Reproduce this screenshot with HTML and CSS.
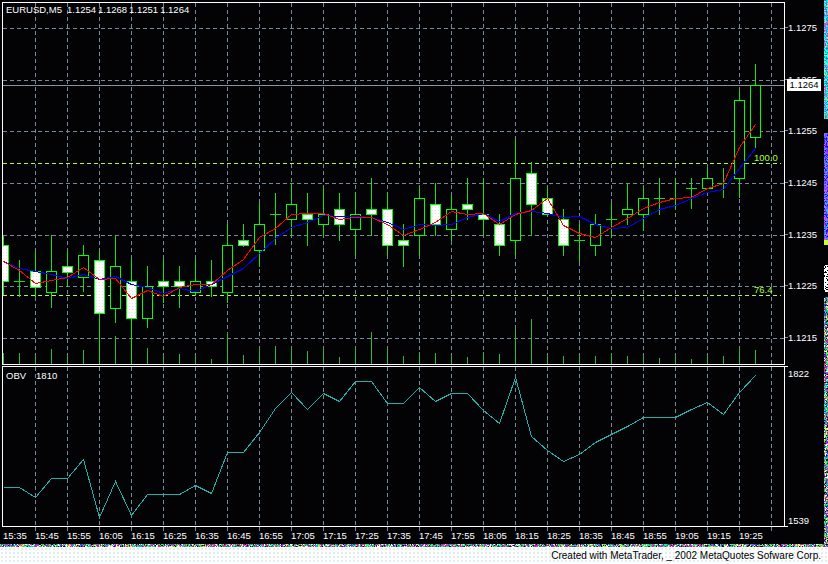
FILE: index.html
```html
<!DOCTYPE html>
<html>
<head>
    <meta charset="utf-8">
    <title>EURUSD,M5</title>
    <link rel="stylesheet" href="styles.css">
</head>
<body>
    <div class="terminal">
        <div class="charts">
            <div class="row">
                <div class="pane pane-main">
                    <svg id="main" class="plot" width="781" height="361" viewBox="3 3 781 361">
                        <defs>
                            <pattern id="speckle" width="3" height="3" patternUnits="userSpaceOnUse">
                                <rect width="3" height="3" fill="#fff"></rect>
                                <rect width="1" height="1" fill="#e3e8e6"></rect>
                            </pattern>
                        </defs>
                    </svg>
                    <div class="legend">
                        <span class="symbol">EURUSD,M5</span>
                        <span>1.1254</span>
                        <span>1.1268</span>
                        <span>1.1251</span>
                        <span>1.1264</span>
                    </div>
                    <span class="fibo fibo-100">100.0</span>
                    <span class="fibo fibo-76">76.4</span>
                </div>
                <div class="price-scale">
                    <div class="tick">1.1275</div>
                    <div class="tick">1.1265</div>
                    <div class="tick">1.1255</div>
                    <div class="tick">1.1245</div>
                    <div class="tick">1.1235</div>
                    <div class="tick">1.1225</div>
                    <div class="tick">1.1215</div>
                    <div class="current-price">1.1264</div>
                </div>
            </div>
            <div class="row row-obv">
                <div class="pane pane-obv">
                    <svg id="obv" class="plot" width="781" height="159" viewBox="3 367 781 159"></svg>
                    <div class="legend legend-obv">
                        <span class="symbol">OBV</span>
                        <span>1810</span>
                    </div>
                </div>
                <div class="obv-scale">
                    <div>1822</div>
                    <div>1539</div>
                </div>
            </div>
            <div class="time-axis">
                <span>15:35</span><span>15:45</span><span>15:55</span><span>16:05</span>
                <span>16:15</span><span>16:25</span><span>16:35</span><span>16:45</span>
                <span>16:55</span><span>17:05</span><span>17:15</span><span>17:25</span>
                <span>17:35</span><span>17:45</span><span>17:55</span><span>18:05</span>
                <span>18:15</span><span>18:25</span><span>18:35</span><span>18:45</span>
                <span>18:55</span><span>19:05</span><span>19:15</span><span>19:25</span>
                <span></span>
            </div>
        </div>
        <canvas id="noise-side" class="noise-side" width="4" height="544"></canvas>
    </div>
    <canvas id="noise-bottom" class="noise-bottom" width="828" height="3"></canvas>
    <div class="footer">Created with MetaTrader, _ 2002 MetaQuotes Sofware Corp.</div>
    <script src="chart.js"></script>
</body>
</html>
```
FILE: styles.css
```css
html, body
{
    margin: 0;
    padding: 0;
}
body
{
    width: 828px;
    height: 564px;
    overflow: hidden;
    background-color: #fff;
    font-family: "Liberation Sans", Arial, sans-serif;
    font-size: 9.5px;
    color: #fff;
}
.terminal
{
    display: flex;
    height: 544px;
    background-color: #030306;
}
.charts
{
    width: 824px;
    padding: 2px 0 0 2px;
    box-sizing: border-box;
}
.row
{
    display: flex;
}
.row-obv
{
    margin-top: 1px;
}
.pane
{
    position: relative;
    width: 783px;
    box-sizing: border-box;
    border: 1px solid #fff;
}
.pane-main
{
    height: 363px;
}
.pane-obv
{
    height: 161px;
}
.plot
{
    display: block;
}
.legend
{
    position: absolute;
    top: 1px;
    left: 3px;
    display: flex;
    gap: 2px;
    line-height: 11px;
}
.legend .symbol
{
    margin-right: 3px;
}
.legend-obv
{
    top: 3px;
}
.legend-obv .symbol
{
    margin-right: 8px;
}
.fibo
{
    position: absolute;
    left: 751px;
    line-height: 11px;
    color: #adff2f;
}
.fibo-100
{
    top: 149px;
}
.fibo-76
{
    top: 281px;
}
.price-scale
{
    position: relative;
    flex: 1;
    display: flex;
    flex-direction: column;
    gap: 40.67px;
    padding-top: 20px;
}
.tick
{
    position: relative;
    height: 11px;
    line-height: 11px;
    padding-left: 3px;
}
.tick::before
{
    content: "";
    position: absolute;
    left: 0;
    top: 5px;
    width: 3px;
    height: 1px;
    background-color: #778899;
}
.current-price
{
    position: absolute;
    top: 77px;
    left: 2px;
    width: 34px;
    height: 12px;
    line-height: 12px;
    text-align: center;
    background-color: #fff;
    color: #000;
}
.obv-scale
{
    flex: 1;
    display: flex;
    flex-direction: column;
    justify-content: space-between;
    padding: 1px 0 1px 3px;
    border-top: 1px solid transparent;
    line-height: 11px;
    position: relative;
}
.obv-scale::before, .obv-scale::after
{
    content: "";
    position: absolute;
    left: 0;
    width: 3px;
    height: 1px;
    background-color: #fff;
}
.obv-scale::before
{
    top: -1px;
}
.obv-scale::after
{
    bottom: 0;
}
.time-axis
{
    display: flex;
    margin-left: 1px;
}
.time-axis span
{
    flex: 0 0 32px;
    line-height: 9px;
}
.time-axis span::before
{
    content: "";
    display: block;
    width: 1px;
    height: 4px;
    background-color: #778899;
}
.time-axis span:first-child::before
{
    background-color: transparent;
}
.noise-side
{
    display: block;
    width: 4px;
    height: 544px;
}
.noise-bottom
{
    display: block;
    width: 828px;
    height: 3px;
}
.footer
{
    height: 17px;
    line-height: 17px;
    padding-right: 7px;
    text-align: right;
    font-size: 10px;
    color: #000;
    background-image: radial-gradient(#cfe6e3 0.6px, transparent 0.9px);
    background-size: 4px 4px;
}
.grid, .level, .last, .volume, .wick, .body, .ma, .obv-line
{
    shape-rendering: crispEdges;
}
.grid
{
    stroke: #778899;
    stroke-dasharray: 4 3;
}
.level
{
    stroke: #adff2f;
    stroke-dasharray: 4 3;
}
.last
{
    stroke: #8a90a0;
}
.volume
{
    stroke: #30bb30;
}
.wick
{
    stroke: #14e014;
}
.body
{
    stroke: #00ff00;
    fill: #030306;
}
.body.down
{
    fill: url(#speckle);
}
.ma
{
    fill: none;
}
.ma.fast
{
    stroke: #ff0000;
}
.ma.slow
{
    stroke: #0000ff;
}
.obv-line
{
    fill: none;
    stroke: #20b2aa;
}
```
FILE: chart.js
```js
// [high, low, body top, body bottom, type]  w = filled, h = hollow, d = doji
var candles = [
    [235, 295, 245, 281, 'w'], [260, 297, 281, 281, 'd'], [251, 297, 271, 287, 'w'],
    [235, 308, 271, 292, 'h'], [251, 287, 266, 272, 'w'], [245, 292, 255, 277, 'h'],
    [250, 364, 260, 313, 'w'], [235, 323, 266, 308, 'h'], [259, 364, 281, 318, 'w'],
    [266, 328, 286, 318, 'h'], [259, 303, 281, 286, 'w'], [266, 308, 281, 286, 'w'],
    [259, 296, 281, 292, 'h'], [260, 297, 281, 286, 'w'], [224, 303, 245, 292, 'h'],
    [224, 247, 240, 245, 'w'], [203, 267, 224, 250, 'h'], [193, 245, 214, 214, 'd'],
    [183, 237, 204, 219, 'h'], [193, 246, 214, 219, 'w'], [187, 237, 214, 224, 'h'],
    [193, 241, 209, 224, 'w'], [193, 255, 214, 229, 'h'], [178, 236, 209, 214, 'w'],
    [193, 256, 209, 245, 'w'], [224, 267, 240, 245, 'w'], [187, 256, 198, 235, 'h'],
    [183, 236, 204, 224, 'w'], [195, 241, 209, 229, 'h'], [178, 220, 204, 209, 'w'],
    [178, 236, 214, 219, 'w'], [214, 256, 224, 245, 'w'], [139, 255, 178, 240, 'h'],
    [162, 235, 173, 204, 'w'], [187, 214, 198, 214, 'w'], [209, 256, 219, 245, 'w'],
    [224, 262, 240, 240, 'd'], [214, 256, 224, 245, 'h'], [203, 237, 219, 219, 'd'],
    [183, 225, 209, 214, 'h'], [187, 231, 198, 214, 'h'], [178, 215, 198, 198, 'd'],
    [178, 209, 198, 198, 'd'], [178, 209, 188, 188, 'd'], [168, 188, 178, 188, 'h'],
    [168, 198, 183, 183, 'd'], [90, 198, 100, 178, 'h'], [64, 148, 85, 137, 'h']
];
var volumes = [
    353, 353, 355, 349, 355, 350, 349, 336, 345, 348, 355, 354, 355, 359, 332, 355,
    348, 346, 347, 351, 347, 357, 347, 332, 347, 356, 352, 353, 355, 357, 352, 354,
    329, 319, 355, 356, 356, 356, 353, 356, 356, 358, 356, 359, 356, 356, 348, 350
];
var fast = [
    261, 270, 283, 280, 277, 267, 279, 278, 298, 290, 296, 287, 284, 284, 270, 259,
    237, 228, 214, 213, 213, 219, 217, 217, 224, 235, 229, 222, 211, 214, 213, 224,
    214, 210, 198, 225, 233, 237, 227, 218, 208, 202, 198, 197, 188, 183, 147, 124
];
var slow = [
    261, 268, 271, 274, 278, 274, 279, 276, 284, 287, 293, 288, 291, 284, 276, 268,
    253, 238, 227, 222, 215, 216, 216, 217, 222, 229, 224, 225, 224, 217, 213, 221,
    213, 211, 213, 217, 216, 224, 228, 227, 218, 209, 205, 198, 192, 189, 168, 148
];
var obv = [
    487, 487, 497, 478, 478, 459, 517, 481, 515, 494, 494, 494, 485, 493, 452, 452,
    432, 408, 392, 409, 393, 401, 381, 381, 403, 403, 387, 401, 393, 393, 410, 423,
    377, 436, 450, 461, 454, 442, 434, 426, 417, 417, 417, 409, 402, 414, 392, 375
];

function cx(i) {
    return 3 + i * 16 + 0.5;
}

function line(cls, x1, y1, x2, y2) {
    return '<line class="' + cls + '" x1="' + x1 + '" y1="' + y1 + '" x2="' + x2 + '" y2="' + y2 + '"></line>';
}

function polyline(cls, ys) {
    var pts = ys.map(function(y, i) {
        return cx(i) + ',' + (y + 0.5);
    });
    return '<polyline class="' + cls + '" points="' + pts.join(' ') + '"></polyline>';
}

function gridX(top, bottom) {
    var out = '';
    for (var x = 35; x <= 771; x += 32) {
        out += line('grid', x + 0.5, top, x + 0.5, bottom);
    }
    return out;
}

function drawMain() {
    var out = gridX(3, 364);
    [28, 80, 131, 183, 235, 286, 338].forEach(function(y) {
        out += line('grid', 3, y + 0.5, 784, y + 0.5);
    });
    out += line('level', 3, 163.5, 781, 163.5);
    out += line('level', 3, 295.5, 781, 295.5);
    out += line('last', 3, 85.5, 784, 85.5);

    volumes.forEach(function(y, i) {
        out += line('volume', cx(i), y, cx(i), 364);
    });
    candles.forEach(function(c, i) {
        var x = cx(i);
        out += line('wick', x, c[0], x, c[1]);
        if (c[4] == 'd') {
            out += line('wick', x - 5.5, c[2] + 0.5, x + 5.5, c[2] + 0.5);
        } else {
            var cls = c[4] == 'w' ? 'body down' : 'body';
            out += '<rect class="' + cls + '" x="' + (x - 5) + '" y="' + (c[2] + 0.5) +
                '" width="10" height="' + (c[3] - c[2]) + '"></rect>';
        }
    });
    out += polyline('ma slow', slow);
    out += polyline('ma fast', fast);
    document.getElementById('main').innerHTML += out;
}

function drawObv() {
    document.getElementById('obv').innerHTML = gridX(367, 526) + polyline('obv-line', obv);
}

// the strips the screen capture left at the edges: fixed seed so every run looks the same
var seed = 7;
function rnd(n) {
    seed = (seed * 1103515245 + 12345) % 2147483648;
    return Math.floor(seed / 65536) % n;
}

function noise(ctx, x, y, w, h, colors) {
    for (var j = y; j < y + h; j++) {
        for (var i = x; i < x + w; i++) {
            ctx.fillStyle = colors[rnd(colors.length)];
            ctx.fillRect(i, j, 1, 1);
        }
    }
}

function drawNoise() {
    var mixed = ['#ff00ff', '#00ff80', '#2040ff', '#ffffff', '#808080', '#00c0c0', '#40ff40', '#c02080', '#101010', '#ffe040'];
    var teal = ['#00e0c0', '#40ffd0', '#20a0ff', '#ff40c0', '#80ff80', '#00ffff', '#6060ff'];
    var purple = ['#6020ff', '#2010c0', '#a040ff', '#20c0c0', '#ff40ff', '#4060ff', '#8080ff'];
    var mono = ['#ffffff', '#ffffff', '#000000'];

    var side = document.getElementById('noise-side').getContext('2d');
    noise(side, 0, 0, 4, 119, teal);
    noise(side, 0, 133, 4, 107, purple);
    side.fillStyle = '#c8ff30';
    side.fillRect(0, 240, 4, 5);
    noise(side, 0, 265, 4, 27, mono);
    noise(side, 0, 297, 4, 247, mixed);

    noise(document.getElementById('noise-bottom').getContext('2d'), 0, 0, 828, 3, mixed);
}

drawMain();
drawObv();
drawNoise();
```
